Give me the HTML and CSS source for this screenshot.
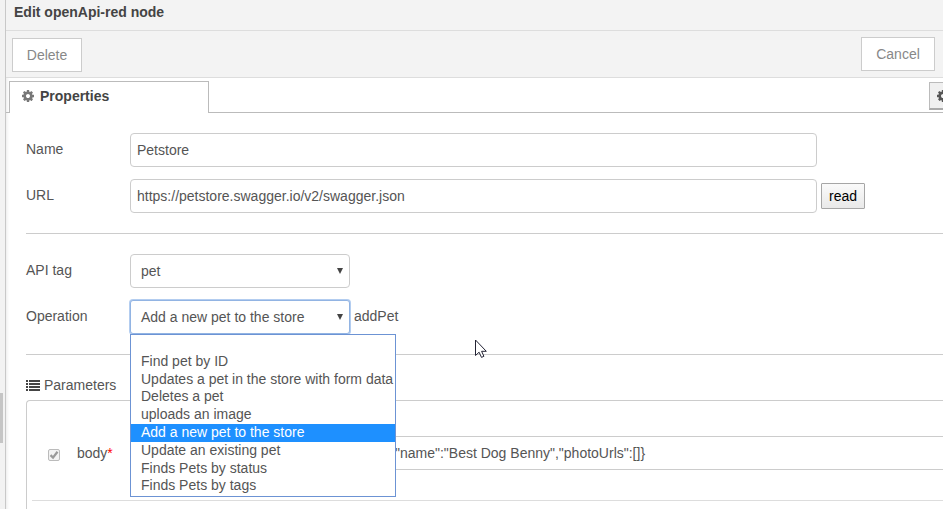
FILE: index.html
```html
<!DOCTYPE html>
<html lang="en">
<head>
<meta charset="utf-8">
<title>Edit openApi-red node</title>
<link rel="stylesheet" href="styles.css">
</head>
<body>
<svg class="defs" aria-hidden="true">
  <symbol id="cog" viewBox="0 128 1536 1536"><path d="M1024 896q0-106-75-181t-181-75-181 75-75 181 75 181 181 75 181-75 75-181zm512-109v222q0 12-8 23t-20 13l-185 28q-19 54-39 91 35 50 107 138 10 12 10 25t-9 23q-27 37-99 108t-94 71q-12 0-26-9l-138-108q-44 23-91 38-16 136-29 186-7 28-36 28h-222q-14 0-24.5-8.5t-11.5-21.5l-28-184q-49-16-90-37l-141 107q-10 9-25 9-14 0-25-11-126-114-165-168-7-10-7-23 0-12 8-23 15-21 51-66.5t54-70.5q-27-50-41-99l-183-27q-13-2-21-12.5t-8-23.5v-222q0-12 8-23t19-13l186-28q14-46 39-92-40-57-107-138-10-12-10-24 0-10 9-23 26-36 98.5-107.5t94.5-71.5q13 0 26 10l138 107q44-23 91-38 16-136 29-186 7-28 36-28h222q14 0 24.5 8.5t11.5 21.5l28 184q49 16 90 37l142-107q9-9 24-9 13 0 25 10 129 119 165 170 7 8 7 22 0 12-8 23-15 21-51 66.5t-54 70.5q26 50 41 98l183 28q13 2 21 12.5t8 23.5z"/></symbol>
</svg>
<div class="app">
  <aside class="gutter"><div class="thumb"></div></aside>
  <main class="tray">
    <header class="title">Edit openApi-red node</header>
    <div class="toolbar">
      <div class="btn">Delete</div>
      <div class="btn cancel">Cancel</div>
    </div>
    <nav class="tabs">
      <div class="tab"><svg class="cog"><use href="#cog"/></svg>Properties</div>
      <div class="tab-button"><svg class="cog"><use href="#cog"/></svg></div>
    </nav>
    <section class="form">
      <div class="row"><span class="label">Name</span><div class="input wide">Petstore</div></div>
      <div class="row"><span class="label">URL</span><div class="input wide">https://petstore.swagger.io/v2/swagger.json</div><div class="read">read</div></div>
      <div class="rule"></div>
      <div class="row"><span class="label">API tag</span><div class="input select">pet<svg class="arrow" viewBox="0 0 6 6"><path d="M0 0h6L3 6z"/></svg></div></div>
      <div class="row">
        <span class="label">Operation</span>
        <div class="input select focus">Add a new pet to the store<svg class="arrow" viewBox="0 0 6 6"><path d="M0 0h6L3 6z"/></svg>
          <div class="menu">
            <div class="option"></div>
            <div class="option">Find pet by ID</div>
            <div class="option">Updates a pet in the store with form data</div>
            <div class="option">Deletes a pet</div>
            <div class="option">uploads an image</div>
            <div class="option active">Add a new pet to the store</div>
            <div class="option">Update an existing pet</div>
            <div class="option">Finds Pets by status</div>
            <div class="option">Finds Pets by tags</div>
          </div>
        </div>
        <span class="hint">addPet</span>
      </div>
      <div class="rule"></div>
      <div class="heading">
        <svg class="list" viewBox="0 0 14 11"><path d="M0 0h2v2H0zM3 0h11v2H3zM0 3h2v2H0zM3 3h11v2H3zM0 6h2v2H0zM3 6h11v2H3zM0 9h2v2H0zM3 9h11v2H3z"/></svg>Parameters
      </div>
      <div class="params">
        <div class="param">
          <div class="check"><svg viewBox="0 0 10 10"><path d="M1.5 5.2L4 7.6L8.5 1.8"/></svg></div>
          <span class="name">body<span class="star">*</span></span>
          <div class="input value">"name":"Best Dog Benny","photoUrls":[]}</div>
        </div>
      </div>
    </section>
  </main>
</div>
<svg class="pointer" viewBox="0 0 13 20"><path d="M1.5 1v15.5l3.6-3.3 2.4 5.2 2.4-1.1-2.3-5h4.7z"/></svg>
</body>
</html>
```
FILE: styles.css
```css
* { box-sizing: border-box; }
body { margin: 0; overflow: hidden; font: 14px/20px "Liberation Sans", Arial, sans-serif; color: #555; background: #fff; }
.defs { display: none; }
.app { display: flex; width: 943px; height: 509px; overflow: hidden; }
.gutter { width: 6px; flex: none; background: #f2f2f2; border-right: 1px solid #c8c8c8; padding-top: 393px; }
.thumb { width: 3px; height: 50px; background: #c5c5c5; }
.tray { flex: 1; min-width: 0; overflow: hidden; box-shadow: inset 4px 0 4px -4px #ddd; }
.title { height: 31px; padding: 2px 8px; background: #f3f3f3; border-bottom: 1px solid #ddd; color: #444; font-weight: bold; }
.toolbar { height: 47px; padding: 7px 8px 0 6px; display: flex; justify-content: space-between; background: #f3f3f3; border-bottom: 1px solid #ddd; }
.btn { width: 70px; height: 34px; border: 1px solid #ccc; background: #fff; color: #888; text-align: center; line-height: 32px; }
.cancel { width: 74px; margin-top: -1px; }
.tabs { height: 35px; padding: 3px 0 0 3px; display: flex; justify-content: space-between; border-bottom: 1px solid #bbb; }
.tab { width: 200px; height: 32px; padding: 0 12px 3px; display: flex; align-items: center; gap: 6px; background: #fff; border: 1px solid #bbb; border-bottom: 0; color: #444; font-weight: bold; }
.cog { width: 12px; height: 12px; flex: none; fill: #777; }
.tab-button { width: 14px; height: 28px; margin-top: 1px; padding: 7px 0 0 7px; overflow: hidden; background: #f0f0f0; border: 1px solid #bbb; border-right: 0; border-bottom: 2px solid #aaa; }
.tab-button .cog { display: block; fill: #555; }
.form { padding: 20px 0 0 20px; }
.row { display: flex; height: 34px; margin-bottom: 12px; }
.label { width: 104px; flex: none; padding-top: 6px; }
.input { height: 34px; padding: 0 6px; border: 1px solid #ccc; border-radius: 4px; line-height: 33px; background: #fff; white-space: nowrap; }
.wide { width: 687px; }
.read { width: 44px; height: 26px; margin: 4px 0 0 4px; border: 1px solid #a6a6a6; border-radius: 1px; background: linear-gradient(#fafafa, #e9e9e9); color: #000; text-align: center; line-height: 24px; }
.rule { height: 1px; margin: 20px 0; background: #ccc; }
.select { position: relative; width: 220px; padding: 0 6px 0 10px; display: flex; justify-content: space-between; align-items: center; }
.arrow { width: 6px; height: 6px; fill: #444; }
.focus { border-color: #92b4e3; border-radius: 3px; box-shadow: 0 0 0 1px #b3cdf0; }
.menu { position: absolute; z-index: 2; left: -1px; top: 33px; width: 266px; height: 163px; border: 1px solid #6c93d4; background: #fff; }
.option { height: 17.8px; padding-left: 10px; line-height: 17.8px; }
.active { background: #1e90ff; color: #fff; }
.hint { padding: 6px 0 0 4px; }
.heading { display: flex; align-items: center; gap: 4px; height: 20px; }
.list { width: 14px; height: 11px; fill: #444; }
.params { height: 130px; margin-top: 5px; padding: 35px 0 0 5px; border: 1px solid #ccc; border-right: 0; border-radius: 4px 0 0 0; }
.param { height: 65px; padding-left: 16px; display: flex; border-bottom: 1px solid #ddd; }
.check { width: 12px; height: 12px; margin-top: 13px; border: 1px solid #bbb; border-radius: 2px; background: #f2f2f2; }
.check svg { display: block; width: 10px; height: 10px; fill: none; stroke: #999; stroke-width: 2.3; }
.name { width: 70px; padding: 7px 0 0 17px; }
.star { color: #f00; }
.value { flex: 1; padding-left: 264px; border-right: 0; border-radius: 4px 0 0 4px; }
.pointer { position: absolute; left: 474px; top: 339px; width: 13px; height: 20px; fill: #fff; stroke: #223; stroke-width: 1; }
```
